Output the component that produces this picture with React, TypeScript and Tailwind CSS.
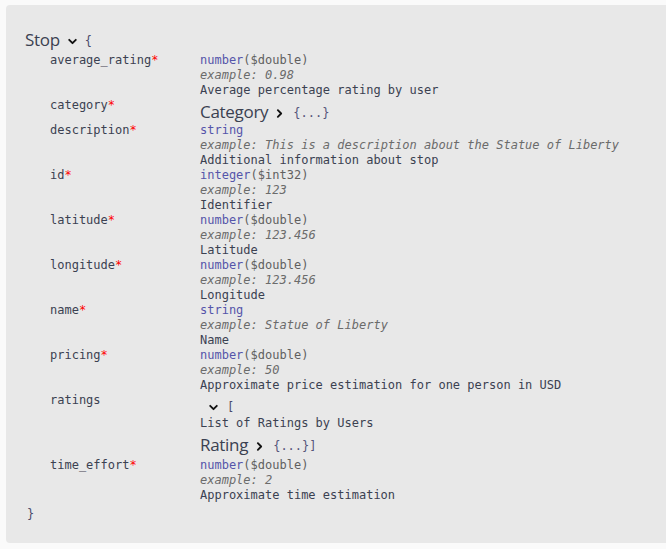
import React from "react"

const mono = "font-['DejaVu_Sans_Mono',monospace] text-[12px]"
const title = "font-['Open_Sans',sans-serif] text-[17px] tracking-[-0.3px] text-[#3b4151]"

function Chevron({ dir = "down", className = "" }: { dir?: "down" | "right"; className?: string }) {
  return (
    <svg viewBox="0 0 20 20" className={`h-[11px] w-[11px] ${className}`} fill="none">
      {dir === "down" ? (
        <path d="M4 7l6 6 6-6" stroke="#111" strokeWidth="3.4" strokeLinecap="round" strokeLinejoin="round" />
      ) : (
        <path d="M7 4l6 6-6 6" stroke="#111" strokeWidth="3.4" strokeLinecap="round" strokeLinejoin="round" />
      )}
    </svg>
  )
}

type Prop = {
  name: string
  required?: boolean
  type?: string
  format?: string
  example?: string
  desc?: string
  ref?: string
}

const props: Prop[] = [
  { name: "average_rating", required: true, type: "number", format: "($double)", example: "0.98", desc: "Average percentage rating by user" },
  { name: "category", required: true, ref: "Category" },
  { name: "description", required: true, type: "string", example: "This is a description about the Statue of Liberty", desc: "Additional information about stop" },
  { name: "id", required: true, type: "integer", format: "($int32)", example: "123", desc: "Identifier" },
  { name: "latitude", required: true, type: "number", format: "($double)", example: "123.456", desc: "Latitude" },
  { name: "longitude", required: true, type: "number", format: "($double)", example: "123.456", desc: "Longitude" },
  { name: "name", required: true, type: "string", example: "Statue of Liberty", desc: "Name" },
  { name: "pricing", required: true, type: "number", format: "($double)", example: "50", desc: "Approximate price estimation for one person in USD" },
]

function RefTitle({ name, close = "" }: { name: string; close?: string }) {
  return (
    <div className="flex h-[25px] items-end pb-[1px]">
      <span className={`${title} leading-[20px]`}>{name}</span>
      <Chevron dir="right" className="ml-[6px] mb-[3px]" />
      <span className={`${mono} ml-[8px] mb-[1px] leading-[15px] text-[#55557a]`}>
        {"{...}"}
        {close}
      </span>
    </div>
  )
}

function Row({ p }: { p: Prop }) {
  return (
    <div className="flex">
      <div className={`${mono} w-[150px] shrink-0 leading-[15px] text-[#3b4151]`}>
        {p.name}
        {p.required && <span className="text-[#f00]">*</span>}
      </div>
      <div className={`${mono} leading-[15px]`}>
        {p.ref ? (
          <RefTitle name={p.ref} />
        ) : (
          <>
            <div>
              <span className="text-[#55a]">{p.type}</span>
              {p.format && <span className="text-[#606060]">{p.format}</span>}
            </div>
            <div className="italic text-[#6b6b6b]">example: {p.example}</div>
            <div className="text-[#3b4151]">{p.desc}</div>
          </>
        )}
      </div>
    </div>
  )
}

export default function App() {
  return (
    <div className="h-[549px] w-[666px] overflow-hidden bg-[#fafafa] pl-[6px] pt-[5px]">
      <div className="w-[700px] rounded-[4px] bg-[#e8e8e8] pb-[21px] pl-[19px] pt-[24px]">
        <div className="flex h-[22px] items-center">
          <span className={`${title} leading-[22px]`}>Stop</span>
          <Chevron className="ml-[7px] mt-[2px]" />
          <span className={`${mono} ml-[7px] mt-[2px] text-[#4b4b6b]`}>{"{"}</span>
        </div>
        <div className="mt-[2px] pl-[25px]">
          {props.map((p) => (
            <Row key={p.name} p={p} />
          ))}
          <div className="flex pb-[2px]">
            <div className={`${mono} w-[150px] shrink-0 leading-[15px] text-[#3b4151]`}>ratings</div>
            <div className={`${mono} leading-[15px]`}>
              <div className="flex h-[23px] items-end pb-[1px] pl-[8px]">
                <Chevron className="mb-[2px]" />
                <span className="ml-[8px] text-[#4b4b6b]">[</span>
              </div>
              <div className="text-[#3b4151]">List of Ratings by Users</div>
              <RefTitle name="Rating" close="]" />
            </div>
          </div>
          <Row p={{ name: "time_effort", required: true, type: "number", format: "($double)", example: "2", desc: "Approximate time estimation" }} />
        </div>
        <div className={`${mono} mt-[4px] pl-[2px] leading-[15px] text-[#4b4b6b]`}>{"}"}</div>
      </div>
    </div>
  )
}
